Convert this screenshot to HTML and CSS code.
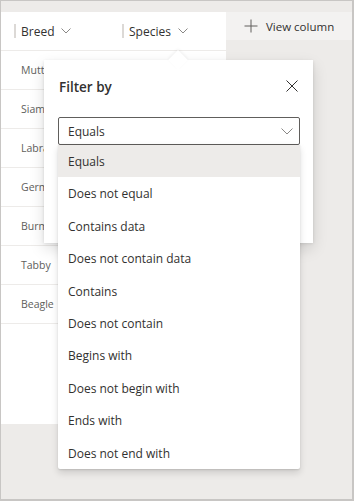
FILE: index.html
```html
<!DOCTYPE html>
<html>
<head lang="en">
    <meta charset="UTF-8">
    <title>Filter by</title>
    <link rel="stylesheet" href="styles.css">
</head>
<body>
<div class="frame">
    <!--列表-->
    <div class="grid">
        <div class="grid_h">
            <div class="col">
                <span class="grip"></span>
                <span class="col_name">Breed</span>
                <svg class="chev" width="10" height="6" viewBox="0 0 10 6"><path d="M0.5 0.5 L5 5 L9.5 0.5" fill="none" stroke="#8a8886" stroke-width="1"/></svg>
            </div>
            <div class="col">
                <span class="grip"></span>
                <span class="col_name">Species</span>
                <svg class="chev" width="10" height="6" viewBox="0 0 10 6"><path d="M0.5 0.5 L5 5 L9.5 0.5" fill="none" stroke="#8a8886" stroke-width="1"/></svg>
            </div>
        </div>
        <div class="row">Mutt</div>
        <div class="row">Siamese</div>
        <div class="row">Labrador</div>
        <div class="row">German</div>
        <div class="row">Burmese</div>
        <div class="row">Tabby</div>
        <div class="row">Beagle</div>
    </div>
    <div class="side">
        <div class="add">
            <svg width="14" height="14" viewBox="0 0 14 14"><path d="M7 0.5 V13.5 M0.5 7 H13.5" fill="none" stroke="#605e5c" stroke-width="1"/></svg>
            <span>View column</span>
        </div>
    </div>

    <!--筛选弹框-->
    <div class="callout">
        <div class="beak"></div>
        <div class="callout_h">
            <div class="title">Filter by</div>
            <svg class="close" width="12" height="12" viewBox="0 0 12 12"><path d="M0.5 0.5 L11.5 11.5 M11.5 0.5 L0.5 11.5" fill="none" stroke="#323130" stroke-width="1"/></svg>
        </div>
        <div class="dropdown">
            <div class="dd_box">
                <span>Equals</span>
                <svg width="12" height="7" viewBox="0 0 12 7"><path d="M0.5 0.5 L6 6 L11.5 0.5" fill="none" stroke="#8a8886" stroke-width="1"/></svg>
            </div>
            <div class="dd_list">
                <div class="opt sel">Equals</div>
                <div class="opt">Does not equal</div>
                <div class="opt">Contains data</div>
                <div class="opt">Does not contain data</div>
                <div class="opt">Contains</div>
                <div class="opt">Does not contain</div>
                <div class="opt">Begins with</div>
                <div class="opt">Does not begin with</div>
                <div class="opt">Ends with</div>
                <div class="opt">Does not end with</div>
            </div>
        </div>
    </div>
</div>
</body>
</html>
```

FILE: styles.css
```css
body {
    margin: 0;
    padding: 0;
    font-family: "Segoe UI", "Open Sans", "Noto Sans", sans-serif;
    color: #323130;
}
.frame {
    position: relative;
    box-sizing: border-box;
    width: 354px;
    height: 501px;
    border: 1px solid #c8c6c4;
    border-right-width: 2px;
    border-bottom-width: 2px;
    background-color: #edebe9;
    padding-top: 11px;
    display: flex;
    align-items: flex-start;
    overflow: hidden;
}
.grid {
    width: 225px;
    height: 412px;
    background-color: #ffffff;
}
.grid_h {
    display: flex;
    height: 38px;
    border-bottom: 1px solid #edebe9;
}
.col {
    width: 108px;
    box-sizing: border-box;
    padding-left: 13px;
    display: flex;
    align-items: center;
}
.grip {
    width: 2px;
    height: 14px;
    background-color: #dcd9d6;
    margin-right: 5px;
}
.col_name {
    font-size: 12px;
    color: #323130;
}
.chev {
    margin-left: 7px;
}
.row {
    height: 38px;
    border-bottom: 1px solid #edebe9;
    padding-left: 20px;
    font-size: 10.5px;
    line-height: 38px;
    color: #605e5c;
    white-space: nowrap;
    overflow: hidden;
}
.side {
    flex: 1;
}
.add {
    height: 28px;
    background-color: #f3f2f1;
    display: flex;
    align-items: center;
    padding-left: 18px;
    gap: 8px;
    font-size: 11.5px;
    color: #323130;
}
.callout {
    position: absolute;
    left: 43px;
    top: 59px;
    width: 269px;
    height: 183px;
    box-sizing: border-box;
    padding: 12px 13px 0 14px;
    background-color: #ffffff;
    box-shadow: 0 6.4px 14.4px rgba(0, 0, 0, 0.132), 0 1.2px 3.6px rgba(0, 0, 0, 0.108);
}
.beak {
    position: absolute;
    left: 127px;
    top: -7px;
    width: 14px;
    height: 14px;
    background-color: #ffffff;
    transform: rotate(45deg);
    box-shadow: -1px -1px 3px rgba(0, 0, 0, 0.06);
}
.callout_h {
    position: relative;
    display: flex;
    align-items: center;
    justify-content: space-between;
    height: 27px;
    padding-left: 1px;
    padding-right: 2px;
}
.title {
    font-size: 13.5px;
    font-weight: 600;
    padding-top: 2px;
}
.dropdown {
    position: relative;
    margin-top: 18px;
}
.dd_box {
    box-sizing: border-box;
    height: 28px;
    border: 1px solid #605e5c;
    border-radius: 2px;
    display: flex;
    align-items: center;
    justify-content: space-between;
    padding: 0 6px 0 9px;
    font-size: 12px;
}
.dd_list {
    position: absolute;
    left: 0;
    right: 0;
    top: 28px;
    background-color: #ffffff;
    box-shadow: 0 3.2px 7.2px rgba(0, 0, 0, 0.132), 0 0.6px 1.8px rgba(0, 0, 0, 0.108);
    border-radius: 0 0 2px 2px;
}
.opt {
    height: 32.4px;
    line-height: 34.4px;
    padding-left: 10px;
    font-size: 12px;
    color: #323130;
}
.opt.sel {
    background-color: #edebe9;
}
```
